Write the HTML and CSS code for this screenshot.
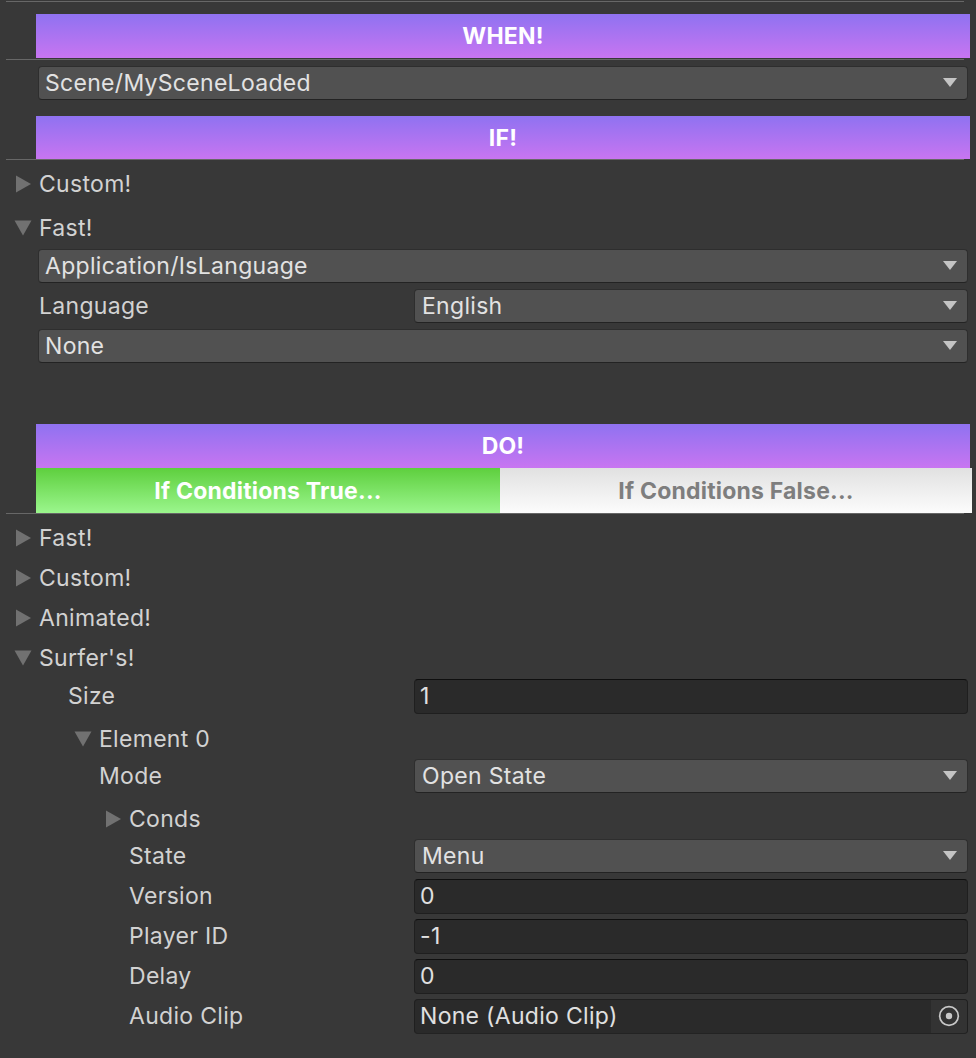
FILE: index.html
```html
<!DOCTYPE html>
<html lang="en">
<head>
<meta charset="utf-8">
<title>Inspector</title>
<link rel="stylesheet" href="styles.css">
</head>
<body>
<div class="inspector">
  <div class="sep sep-top"></div>
  <div class="banner banner-when">WHEN!</div>
  <div class="sep sep-when"></div>
  <div class="row row-event">
    <div class="popup full">Scene/MySceneLoaded<span class="arrow"></span></div>
  </div>
  <div class="banner banner-if">IF!</div>
  <div class="sep"></div>

  <div class="row foldout mt4">
    <svg class="tri" viewBox="0 0 18 18"><polygon points="2,0.5 17,9 2,17.5"/></svg>
    <span class="label">Custom!</span>
  </div>
  <div class="row foldout mt4">
    <svg class="tri" viewBox="0 0 18 18"><polygon points="0.5,1.5 17.5,1.5 9,16.5"/></svg>
    <span class="label">Fast!</span>
  </div>
  <div class="row mt-2">
    <div class="popup full">Application/IsLanguage<span class="arrow"></span></div>
  </div>
  <div class="row prop">
    <span class="label ind0">Language</span>
    <div class="popup">English<span class="arrow"></span></div>
  </div>
  <div class="row">
    <div class="popup full">None<span class="arrow"></span></div>
  </div>

  <div class="banner banner-do">DO!</div>
  <div class="choice">
    <div class="choice-btn choice-true">If Conditions True...</div>
    <div class="choice-btn choice-false">If Conditions False...</div>
  </div>
  <div class="sep"></div>

  <div class="row foldout mt4">
    <svg class="tri" viewBox="0 0 18 18"><polygon points="2,0.5 17,9 2,17.5"/></svg>
    <span class="label">Fast!</span>
  </div>
  <div class="row foldout">
    <svg class="tri" viewBox="0 0 18 18"><polygon points="2,0.5 17,9 2,17.5"/></svg>
    <span class="label">Custom!</span>
  </div>
  <div class="row foldout">
    <svg class="tri" viewBox="0 0 18 18"><polygon points="2,0.5 17,9 2,17.5"/></svg>
    <span class="label">Animated!</span>
  </div>
  <div class="row foldout">
    <svg class="tri" viewBox="0 0 18 18"><polygon points="0.5,1.5 17.5,1.5 9,16.5"/></svg>
    <span class="label">Surfer's!</span>
  </div>
  <div class="row prop mt-2">
    <span class="label ind-size">Size</span>
    <div class="field">1</div>
  </div>
  <div class="row foldout lvl2 nested">
    <svg class="tri" viewBox="0 0 18 18"><polygon points="0.5,1.5 17.5,1.5 9,16.5"/></svg>
    <span class="label">Element 0</span>
  </div>
  <div class="row prop">
    <span class="label ind2">Mode</span>
    <div class="popup">Open State<span class="arrow"></span></div>
  </div>
  <div class="row foldout lvl3 nested">
    <svg class="tri" viewBox="0 0 18 18"><polygon points="2,0.5 17,9 2,17.5"/></svg>
    <span class="label">Conds</span>
  </div>
  <div class="row prop">
    <span class="label ind3">State</span>
    <div class="popup">Menu<span class="arrow"></span></div>
  </div>
  <div class="row prop">
    <span class="label ind3">Version</span>
    <div class="field">0</div>
  </div>
  <div class="row prop">
    <span class="label ind3">Player ID</span>
    <div class="field">-1</div>
  </div>
  <div class="row prop">
    <span class="label ind3">Delay</span>
    <div class="field">0</div>
  </div>
  <div class="row prop">
    <span class="label ind3">Audio Clip</span>
    <div class="field object">
      <span class="object-name">None (Audio Clip)</span>
      <span class="picker">
        <svg viewBox="0 0 24 24" width="24" height="24"><circle cx="12" cy="12" r="9.3" fill="none" stroke="#c8c8c8" stroke-width="1.7"/><circle cx="12" cy="12" r="3.2" fill="#c8c8c8"/></svg>
      </span>
    </div>
  </div>
</div>
</body>
</html>
```

FILE: styles.css
```css
* { box-sizing: border-box; }

html, body {
  margin: 0;
  padding: 0;
  background: #383838;
}

body {
  font-family: Inter, "Noto Sans", "Liberation Sans", sans-serif;
  font-size: 23px;
  letter-spacing: 0.3px;
  color: #d2d2d2;
  width: 976px;
  height: 1058px;
  overflow: hidden;
}

.inspector {
  display: flex;
  flex-direction: column;
}

.sep {
  height: 1px;
  background: #676767;
  margin: 0 12px 0 6px;
  flex: none;
}
.sep-top { margin-top: 1px; }
.sep-when { margin-top: 1px; }

.banner {
  height: 44px;
  margin: 0 6px 0 36px;
  background: linear-gradient(to bottom, #8f72f1, #c875f1);
  color: #ffffff;
  font-weight: 700;
  letter-spacing: 0.2px;
  display: flex;
  align-items: center;
  justify-content: center;
  flex: none;
}
.banner-when { margin-top: 12px; }
.banner-if { margin-top: 16px; height: 43px; }
.banner-do { margin-top: 58px; }

.choice {
  display: flex;
  height: 45px;
  margin: 0 4px 0 36px;
  flex: none;
  font-weight: 700;
  letter-spacing: 0.2px;
}
.choice-btn {
  display: flex;
  align-items: center;
  justify-content: center;
}
.choice-true {
  width: 464px;
  background: linear-gradient(to bottom, #5ecf3e, #9bf68d);
  color: #ffffff;
}
.choice-false {
  flex: 1;
  background: linear-gradient(to bottom, #e1e1e1, #fcfcfc);
  color: #7e7e7e;
}

.row {
  height: 40px;
  display: flex;
  align-items: center;
  flex: none;
  margin-right: 8px;
  padding-left: 38px;
}
.row-event {
  height: 34px;
  margin-top: 6px;
}
.mt4 { margin-top: 4px; }
.mt-2 { margin-top: -2px; }

.foldout { padding-left: 14px; }
.foldout .tri {
  width: 18px;
  height: 18px;
  fill: #717171;
  margin-right: 7px;
  flex: none;
}
.foldout.lvl2 { padding-left: 74px; }
.foldout.lvl3 { padding-left: 104px; }
.nested { margin-top: 3px; margin-bottom: -3px; }

.label {
  white-space: nowrap;
  color: #d2d2d2;
}

.prop { padding-left: 0; }
.prop .label { width: 414px; flex: none; }
.ind0 { padding-left: 39px; }
.ind-size { padding-left: 68px; }
.ind2 { padding-left: 99px; }
.ind3 { padding-left: 129px; }

.popup {
  position: relative;
  flex: 1;
  height: 34px;
  background: #515151;
  border: 1px solid #2e2e2e;
  border-bottom-color: #232323;
  border-radius: 4px;
  color: #e2e2e2;
  display: flex;
  align-items: center;
  padding-left: 7px;
  white-space: nowrap;
}
.popup.full { padding-left: 6px; }

.arrow {
  position: absolute;
  right: 10px;
  top: 50%;
  margin-top: -5px;
  width: 0;
  height: 0;
  border-left: 7px solid transparent;
  border-right: 7px solid transparent;
  border-top: 9px solid #c4c4c4;
}

.field {
  flex: 1;
  height: 35px;
  background: #2a2a2a;
  border: 1px solid #1f1f1f;
  border-top-color: #0f0f0f;
  border-radius: 4px;
  color: #e0e0e0;
  display: flex;
  align-items: center;
  padding-left: 5px;
  white-space: nowrap;
}

.field.object {
  padding-right: 0;
  border-top-color: #1f1f1f;
  border-bottom-color: #232323;
}
.object-name { flex: 1; }
.picker {
  width: 36px;
  align-self: stretch;
  background: #333333;
  border-radius: 0 3px 3px 0;
  display: flex;
  align-items: center;
  justify-content: center;
}
```
